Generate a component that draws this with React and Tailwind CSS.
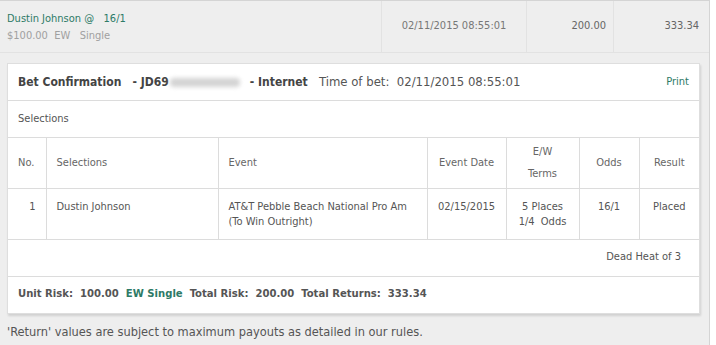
import React from 'react';

const font = { fontFamily: '"DejaVu Sans Condensed", "DejaVu Sans", sans-serif' };

const App = () => {
    return (
        <div className="w-[716px] h-[345px] bg-white text-[11px] text-[#555]" style={font}>
            <div className="w-[710px] h-[345px] bg-[#eeeeee] border-t border-r border-[#d4d4d4] flex flex-col">
                {/* Bet summary row */}
                <div className="flex h-[52px] border-b border-[#e2e2e2]">
                    <div className="w-[381px] pl-[7px] flex flex-col justify-center leading-[17px] pt-[1px]">
                        <span className="text-[#2d7a66]">Dustin Johnson @&nbsp;&nbsp; 16/1</span>
                        <span className="text-[#a0a0a0]">$100.00&nbsp;&nbsp;EW&nbsp;&nbsp; Single</span>
                    </div>
                    <div className="w-[145px] border-l border-[#e2e2e2] flex items-center justify-center text-[#777]">02/11/2015 08:55:01</div>
                    <div className="w-[87px] border-l border-[#e2e2e2] flex items-center justify-end pr-[7px] text-[#666]">200.00</div>
                    <div className="flex-1 border-l border-[#e2e2e2] flex items-center justify-end pr-[10px] text-[#666]">333.34</div>
                </div>

                {/* Confirmation card */}
                <div className="ml-[7px] mt-[10px] w-[693px] bg-white border border-[#dedede] shadow-[1px_2px_2px_rgba(0,0,0,0.12)]">
                    <div className="h-[37px] flex items-center justify-between pl-[10px] pr-[10px] border-b border-[#dcdcdc]">
                        <div className="text-[12px] text-[#444] flex items-center whitespace-pre">
                            <span className="font-bold">Bet Confirmation</span>
                            <span className="font-bold">{'   - JD69'}</span>
                            <span className="inline-block w-[70px] h-[9px] bg-[#d4d4d4] blur-[2px] rounded-sm ml-[1px] mr-[10px]"></span>
                            <span className="font-bold">- Internet</span>
                            <span className="text-[13px] text-[#555]">{'   Time of bet:  02/11/2015 08:55:01'}</span>
                        </div>
                        <span className="text-[#2d7a66]">Print</span>
                    </div>
                    <div className="h-[36px] flex items-center pl-[10px] text-[#555]">Selections</div>

                    <table className="w-full border-collapse text-[11px]">
                        <thead>
                            <tr className="h-[51px] border-t border-[#dcdcdc] text-[#666] font-normal">
                                <th className="w-[38px] font-normal text-left pl-[10px]">No.</th>
                                <th className="w-[172px] font-normal text-left pl-[10px] border-l border-[#dcdcdc]">Selections</th>
                                <th className="w-[209px] font-normal text-left pl-[10px] border-l border-[#dcdcdc]">Event</th>
                                <th className="w-[79px] font-normal text-center border-l border-[#dcdcdc]">Event Date</th>
                                <th className="w-[73px] font-normal text-center border-l border-[#dcdcdc] leading-[22px]">E/W<br />Terms</th>
                                <th className="w-[60px] font-normal text-center border-l border-[#dcdcdc]">Odds</th>
                                <th className="font-normal text-center border-l border-[#dcdcdc]">Result</th>
                            </tr>
                        </thead>
                        <tbody>
                            <tr className="h-[51px] border-t border-[#dcdcdc] align-top leading-[15px] text-[#555]">
                                <td className="text-right pr-[10px] pt-[10px]">1</td>
                                <td className="pl-[10px] pt-[10px] border-l border-[#dcdcdc]">Dustin Johnson</td>
                                <td className="pl-[10px] pt-[10px] border-l border-[#dcdcdc]">AT&amp;T Pebble Beach National Pro Am<br />(To Win Outright)</td>
                                <td className="text-center pt-[10px] border-l border-[#dcdcdc]">02/15/2015</td>
                                <td className="text-center pt-[10px] border-l border-[#dcdcdc]">5 Places<br />1/4&nbsp; Odds</td>
                                <td className="text-center pt-[10px] border-l border-[#dcdcdc]">16/1</td>
                                <td className="text-center pt-[10px] border-l border-[#dcdcdc]">Placed</td>
                            </tr>
                            <tr className="h-[36px] border-t border-[#dcdcdc]">
                                <td colSpan={7} className="text-right pr-[18px] text-[#555] pb-[1px]">Dead Heat of 3</td>
                            </tr>
                        </tbody>
                    </table>

                    <div className="h-[37px] flex items-center pl-[10px] border-t border-[#dcdcdc] font-bold text-[11.2px] text-[#555] whitespace-pre">
                        <span>Unit Risk:  100.00  </span>
                        <span className="text-[#2d7a66]">EW Single</span>
                        <span>  Total Risk:  200.00  Total Returns:  333.34</span>
                    </div>
                </div>

                <div className="pl-[7px] mt-[8px] text-[12.7px] text-[#555]">'Return' values are subject to maximum payouts as detailed in our rules.</div>
            </div>
        </div>
    );
};

export default App;
